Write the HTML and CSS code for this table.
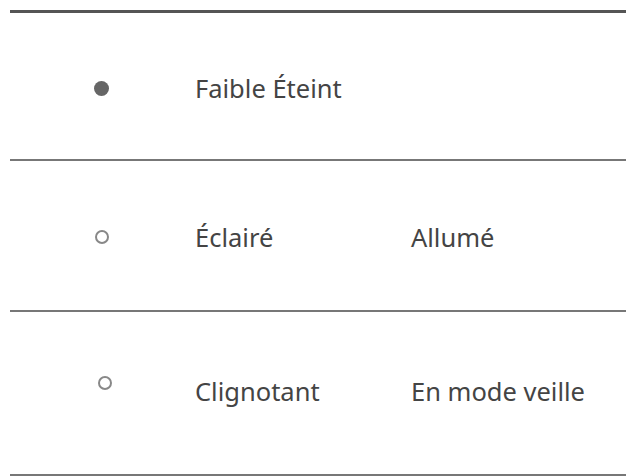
FILE: index.html
```html
<!DOCTYPE html>
<html lang="fr">
<head>
    <meta charset="UTF-8">
    <title>États du voyant</title>
    <link rel="stylesheet" href="styles.css">
</head>
<body>
    <div class="led-table">
        <div class="led-row row-1">
            <span class="led led-dim"></span>
            <span class="cell">Faible Éteint</span>
            <span class="cell"></span>
        </div>
        <div class="led-row row-2">
            <span class="led led-off"></span>
            <span class="cell">Éclairé</span>
            <span class="cell">Allumé</span>
        </div>
        <div class="led-row row-3">
            <span class="led led-off led-shift"></span>
            <span class="cell">Clignotant</span>
            <span class="cell">En mode veille</span>
        </div>
    </div>
</body>
</html>
```

FILE: styles.css
```css
body { margin: 0; background: white; font-family: "Noto Sans", "Open Sans", sans-serif; color: #444; }
.led-table {
    margin: 10px 0 0 10px;
    border-top: 3px solid #555;
}
.led-row {
    display: grid;
    grid-template-columns: 185px 216px 1fr;
    align-items: center;
    border-bottom: 2px solid #777;
    font-size: 25.5px;
    box-sizing: border-box;
}
.row-1 { height: 148px; padding-top: 4px; }
.row-2 { height: 151px; padding-top: 2px; }
.row-3 { height: 164px; padding-bottom: 4px; }
.led {
    width: 15px;
    height: 15px;
    margin-left: 84px;
    border-radius: 50%;
    box-sizing: border-box;
}
.led-dim { background: #666; }
.led-off { border: 2px solid #888; width: 14px; height: 14px; margin-left: 85px; }
.led-shift { margin-left: 88px; margin-top: -16px; }
.cell { white-space: nowrap; }
```
